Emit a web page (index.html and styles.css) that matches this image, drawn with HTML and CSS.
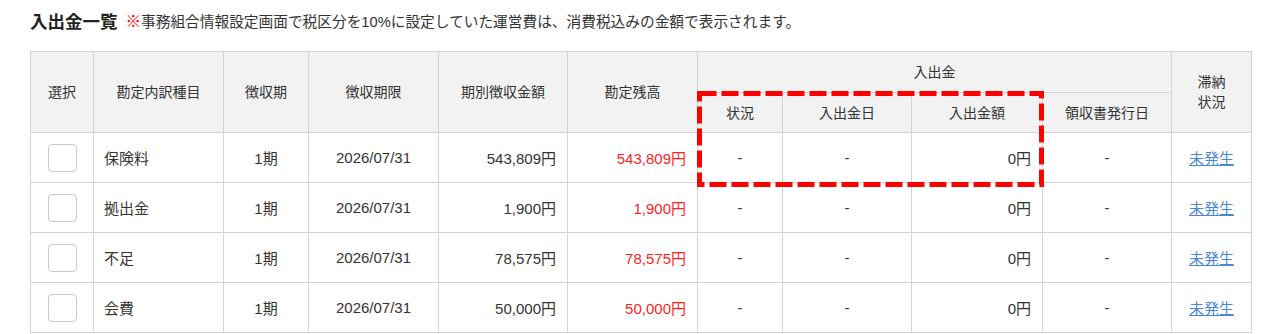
FILE: index.html
```html
<!DOCTYPE html>
<html lang="ja">
<head>
<meta charset="utf-8">
<title>入出金一覧</title>
<link rel="stylesheet" href="styles.css">
</head>
<body>
<div class="page">
  <div class="title-row">
    <h2 class="title">入出金一覧</h2>
    <p class="note"><span class="mark">※</span>事務組合情報設定画面で税区分を10%に設定していた運営費は、消費税込みの金額で表示されます。</p>
  </div>
  <div class="table-wrap">
    <table class="list">
      <colgroup>
        <col class="c63"><col class="c130"><col class="c85"><col class="c130"><col class="c129"><col class="c130">
        <col class="c85"><col class="c129"><col class="c131"><col class="c129"><col class="c80">
      </colgroup>
      <thead>
        <tr class="h1">
          <th rowspan="2">選択</th>
          <th rowspan="2">勘定内訳種目</th>
          <th rowspan="2">徴収期</th>
          <th rowspan="2">徴収期限</th>
          <th rowspan="2">期別徴収金額</th>
          <th rowspan="2">勘定残高</th>
          <th colspan="4">入出金</th>
          <th rowspan="2" class="two">滞納<br>状況</th>
        </tr>
        <tr class="h2">
          <th>状況</th>
          <th>入出金日</th>
          <th>入出金額</th>
          <th>領収書発行日</th>
        </tr>
      </thead>
      <tbody>
        <tr>
          <td class="ck"><span class="box"></span></td>
          <td class="left">保険料</td>
          <td class="center">1期</td>
          <td class="center">2026/07/31</td>
          <td class="right">543,809円</td>
          <td class="right red">543,809円</td>
          <td class="center">-</td>
          <td class="center">-</td>
          <td class="right">0円</td>
          <td class="center">-</td>
          <td class="center"><a href="#" class="link">未発生</a></td>
        </tr>
        <tr>
          <td class="ck"><span class="box"></span></td>
          <td class="left">拠出金</td>
          <td class="center">1期</td>
          <td class="center">2026/07/31</td>
          <td class="right">1,900円</td>
          <td class="right red">1,900円</td>
          <td class="center">-</td>
          <td class="center">-</td>
          <td class="right">0円</td>
          <td class="center">-</td>
          <td class="center"><a href="#" class="link">未発生</a></td>
        </tr>
        <tr>
          <td class="ck"><span class="box"></span></td>
          <td class="left">不足</td>
          <td class="center">1期</td>
          <td class="center">2026/07/31</td>
          <td class="right">78,575円</td>
          <td class="right red">78,575円</td>
          <td class="center">-</td>
          <td class="center">-</td>
          <td class="right">0円</td>
          <td class="center">-</td>
          <td class="center"><a href="#" class="link">未発生</a></td>
        </tr>
        <tr>
          <td class="ck"><span class="box"></span></td>
          <td class="left">会費</td>
          <td class="center">1期</td>
          <td class="center">2026/07/31</td>
          <td class="right">50,000円</td>
          <td class="right red">50,000円</td>
          <td class="center">-</td>
          <td class="center">-</td>
          <td class="right">0円</td>
          <td class="center">-</td>
          <td class="center"><a href="#" class="link">未発生</a></td>
        </tr>
      </tbody>
    </table>
    <svg class="highlight" width="347" height="96" viewBox="0 0 347 96" aria-hidden="true">
      <rect x="2.5" y="2.5" width="342" height="91" fill="none" stroke="#ff0000" stroke-width="5" stroke-dasharray="17 5"/>
    </svg>
  </div>
</div>
</body>
</html>
```
FILE: styles.css
```css
* { box-sizing: border-box; }
html, body { margin: 0; padding: 0; background: #fff; }
body {
  font-family: "Liberation Sans", "Noto Sans CJK JP", sans-serif;
  color: #333;
  font-size: 15px;
}
.page { padding: 8px 29px 0 30px; }
.title-row {
  display: flex;
  align-items: center;
  gap: 8px;
  height: 24px;
  margin-bottom: 19px;
}
.title {
  margin: 0;
  font-size: 17.5px;
  font-weight: bold;
  color: #222;
}
.note { margin: 0; font-size: 14.7px; color: #333; }
.mark { color: #ff0000; font-weight: bold; font-size: 15.5px; }

.table-wrap { position: relative; width: 1221px; }
.list {
  width: 1221px;
  table-layout: fixed;
  border-collapse: collapse;
  border: 1px solid #d4d4d4;
}
.c63 { width: 63px; } .c130 { width: 130px; } .c85 { width: 85px; }
.c129 { width: 129px; } .c131 { width: 131px; } .c80 { width: 80px; }

.list th, .list td { border: 1px solid #d4d4d4; padding: 0; }
.list th {
  background: #f2f2f2;
  font-weight: normal;
  font-size: 14px;
  text-align: center;
  vertical-align: middle;
  line-height: 20px;
}
.h1 th { height: 41px; }
.h2 th { height: 40px; }
.list td { height: 50px; vertical-align: middle; }
.left { padding-left: 10px !important; text-align: left; }
.center { text-align: center; }
.right { text-align: right; padding-right: 11px !important; }
.red { color: #ff1f1f; }
.ck { text-align: center; }
.box {
  display: inline-block;
  width: 29px;
  height: 28px;
  border: 1px solid #c8c8c8;
  border-radius: 4px;
  background: #fff;
  vertical-align: middle;
}
.link { color: #4a86d8; text-decoration: underline; }

.highlight {
  position: absolute;
  left: 667px;
  top: 40px;
}
```
